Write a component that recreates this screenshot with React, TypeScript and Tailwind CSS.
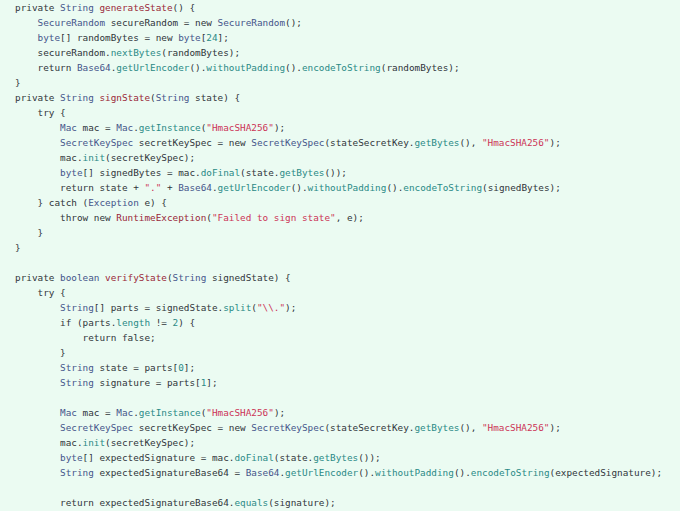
import React from "react";

type Tok = [string, string?];

const T = "text-[#45558a]"; // types
const F = "text-[#2a8a86]"; // calls, numbers
const D = "text-[#9a2838]"; // declarations
const S = "text-[#cc3456]"; // strings

const lines: Tok[][] = [
  [["private "], ["String", T], [" "], ["generateState", D], ["() {"]],
  [["    "], ["SecureRandom", T], [" secureRandom = new "], ["SecureRandom", T], ["();"]],
  [["    "], ["byte", T], ["[] randomBytes = new "], ["byte", T], ["["], ["24", F], ["];"]],
  [["    secureRandom."], ["nextBytes", F], ["(randomBytes);"]],
  [["    return "], ["Base64", T], ["."], ["getUrlEncoder", F], ["()."], ["withoutPadding", F], ["()."], ["encodeToString", F], ["(randomBytes);"]],
  [["}"]],
  [["private "], ["String", T], [" "], ["signState", D], ["("], ["String", T], [" state) {"]],
  [["    try {"]],
  [["        "], ["Mac", T], [" mac = "], ["Mac", T], ["."], ["getInstance", F], ["("], ['"HmacSHA256"', S], [");"]],
  [["        "], ["SecretKeySpec", T], [" secretKeySpec = new "], ["SecretKeySpec", T], ["(stateSecretKey."], ["getBytes", F], ["(), "], ['"HmacSHA256"', S], [");"]],
  [["        mac."], ["init", F], ["(secretKeySpec);"]],
  [["        "], ["byte", T], ["[] signedBytes = mac."], ["doFinal", F], ["(state."], ["getBytes", F], ["());"]],
  [["        return state + "], ['"."', S], [" + "], ["Base64", T], ["."], ["getUrlEncoder", F], ["()."], ["withoutPadding", F], ["()."], ["encodeToString", F], ["(signedBytes);"]],
  [["    } catch ("], ["Exception", T], [" e) {"]],
  [["        throw new "], ["RuntimeException", D], ["("], ['"Failed to sign state"', S], [", e);"]],
  [["    }"]],
  [["}"]],
  [[""]],
  [["private "], ["boolean", T], [" "], ["verifyState", D], ["("], ["String", T], [" signedState) {"]],
  [["    try {"]],
  [["        "], ["String", T], ["[] parts = signedState."], ["split", F], ["("], ['"\\\\."', S], [");"]],
  [["        if (parts."], ["length", F], [" != "], ["2", F], [") {"]],
  [["            return false;"]],
  [["        }"]],
  [["        "], ["String", T], [" state = parts["], ["0", F], ["];"]],
  [["        "], ["String", T], [" signature = parts["], ["1", F], ["];"]],
  [[""]],
  [["        "], ["Mac", T], [" mac = "], ["Mac", T], ["."], ["getInstance", F], ["("], ['"HmacSHA256"', S], [");"]],
  [["        "], ["SecretKeySpec", T], [" secretKeySpec = new "], ["SecretKeySpec", T], ["(stateSecretKey."], ["getBytes", F], ["(), "], ['"HmacSHA256"', S], [");"]],
  [["        mac."], ["init", F], ["(secretKeySpec);"]],
  [["        "], ["byte", T], ["[] expectedSignature = mac."], ["doFinal", F], ["(state."], ["getBytes", F], ["());"]],
  [["        "], ["String", T], [" expectedSignatureBase64 = "], ["Base64", T], ["."], ["getUrlEncoder", F], ["()."], ["withoutPadding", F], ["()."], ["encodeToString", F], ["(expectedSignature);"]],
  [[""]],
  [["        return expectedSignatureBase64."], ["equals", F], ["(signature);"]],
];

export default function App() {
  return (
    <div className="w-[680px] h-[511px] overflow-hidden bg-[#ebfbf2] pl-[15px] pt-0">
      <pre className="font-['DejaVu_Sans_Mono',monospace] text-[9.35px] leading-[15px] text-[#30353a] whitespace-pre m-0">
        {lines.map((line, i) => (
          <div key={i} className="h-[15px]">
            {line.map(([txt, cls], j) => (
              <span key={j} className={cls}>
                {txt}
              </span>
            ))}
          </div>
        ))}
      </pre>
    </div>
  );
}
